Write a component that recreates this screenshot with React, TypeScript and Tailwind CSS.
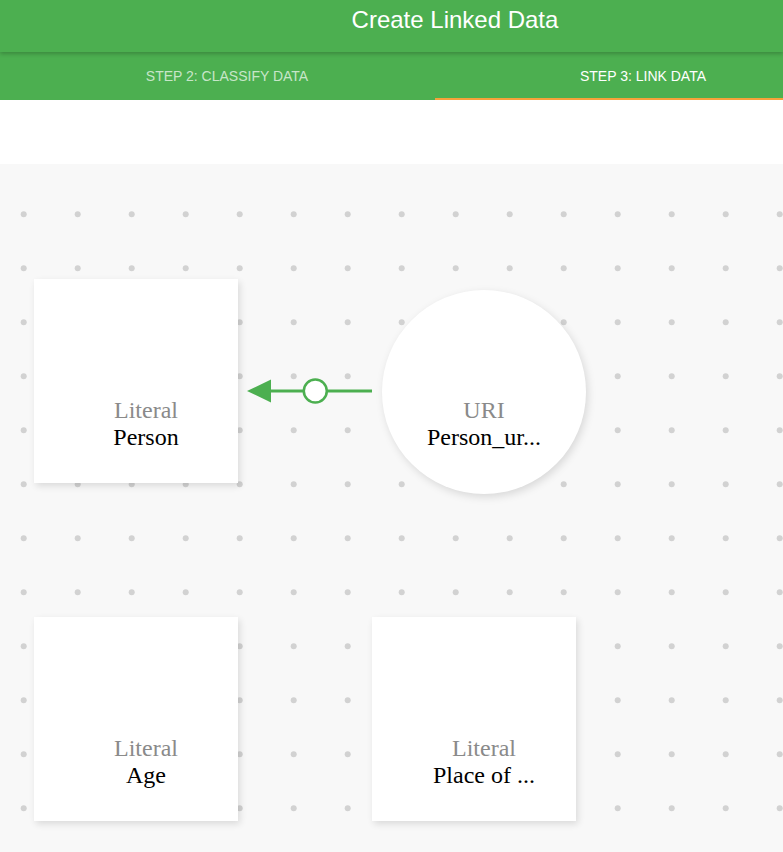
import React from "react";

const serif = "font-['Liberation_Serif','Times_New_Roman',serif]";

function NodeLabel({ kind, name }: { kind: string; name: string }) {
  return (
    <div className={`${serif} text-[24px] leading-[27px] text-center`}>
      <div className="text-[#8a8a8a]">{kind}</div>
      <div className="text-black">{name}</div>
    </div>
  );
}

function LiteralBox({ name, left, top }: { name: string; left: number; top: number }) {
  return (
    <div
      className="absolute w-[204px] h-[204px] bg-white shadow-[2px_3px_7px_rgba(0,0,0,0.12)] pt-[118px] pl-5"
      style={{ left, top }}
    >
      <NodeLabel kind="Literal" name={name} />
    </div>
  );
}

export default function App() {
  return (
    <div className="w-[783px] h-[852px] overflow-hidden bg-white font-['Liberation_Sans',Arial,sans-serif]">
      {/* App bar */}
      <div className="relative z-10 h-[52px] bg-[#4caf50] shadow-[0_2px_4px_rgba(0,0,0,0.22)] overflow-hidden">
        <div className="w-[910px] pt-[6px] text-center text-white text-[24px] leading-[28px]">
          Create Linked Data
        </div>
      </div>

      {/* Tabs */}
      <div className="flex h-12 bg-[#4caf50] overflow-hidden">
        <div className="w-[19px] shrink-0" />
        <div className="w-[416px] shrink-0 flex items-center justify-center pt-px text-[14px] uppercase text-white/70">
          Step 2: Classify Data
        </div>
        <div className="w-[416px] shrink-0 flex flex-col">
          <div className="flex-1 flex items-center justify-center pt-[3px] text-[14px] uppercase text-white">
            Step 3: Link Data
          </div>
          <div className="h-[2px] bg-[#f7a23b]" />
        </div>
      </div>

      <div className="h-16 bg-white" />

      {/* Canvas */}
      <div className="relative h-[688px] bg-[#f8f8f8]">
        <svg className="absolute inset-0" width="783" height="688">
          <defs>
            <pattern id="dots" width="54" height="54" patternUnits="userSpaceOnUse">
              <circle cx="23.7" cy="50.3" r="3" fill="#d2d2d2" />
            </pattern>
          </defs>
          <rect width="783" height="688" fill="url(#dots)" />
        </svg>

        <LiteralBox name="Person" left={34} top={115} />
        <LiteralBox name="Age" left={34} top={453} />
        <LiteralBox name="Place of ..." left={372} top={453} />

        <div className="absolute left-[382px] top-[126px] w-[204px] h-[204px] rounded-full bg-white shadow-[2px_3px_8px_rgba(0,0,0,0.13)] pt-[107px]">
          <NodeLabel kind="URI" name="Person_ur..." />
        </div>

        {/* Link edge */}
        <svg className="absolute left-0 top-0" width="783" height="688">
          <line x1="268" y1="227" x2="372" y2="227" stroke="#4caf50" strokeWidth="3" />
          <polygon points="247,227 271,215.5 271,238.5" fill="#4caf50" />
          <circle cx="315.3" cy="227" r="11.5" fill="white" stroke="#4caf50" strokeWidth="2.5" />
        </svg>
      </div>
    </div>
  );
}
